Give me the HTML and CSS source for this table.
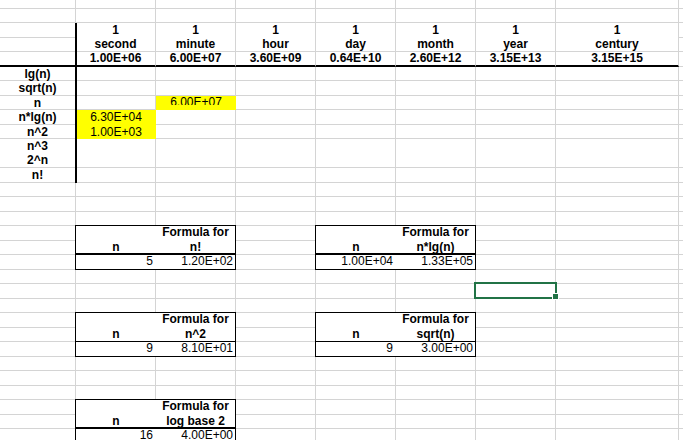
FILE: index.html
```html
<!DOCTYPE html>
<html>
<head>
<meta charset="utf-8">
<title>Sheet</title>
<link rel="stylesheet" href="styles.css">
</head>
<body>
<div class="sheet">
  <div class="hdr">
    <div class="hc"><span>1</span><span>second</span></div>
    <div class="hc"><span>1</span><span>minute</span></div>
    <div class="hc"><span>1</span><span>hour</span></div>
    <div class="hc"><span>1</span><span>day</span></div>
    <div class="hc"><span>1</span><span>month</span></div>
    <div class="hc"><span>1</span><span>year</span></div>
    <div class="hc"><span>1</span><span>century</span></div>
    <div class="hv">1.00E+06</div>
    <div class="hv">6.00E+07</div>
    <div class="hv">3.60E+09</div>
    <div class="hv">0.64E+10</div>
    <div class="hv">2.60E+12</div>
    <div class="hv">3.15E+13</div>
    <div class="hv">3.15E+15</div>
  </div>

  <div class="gap">
    <div class="gc"></div><div class="gc"></div><div class="gc"></div><div class="gc"></div>
    <div class="gc"></div><div class="gc"></div><div class="gc"></div><div class="gc last"></div>
  </div>

  <div class="yel y-c8"><span class="clip">6.00E+07</span></div>
  <div class="yel y-b9"><span class="l15">6.30E+04</span><span class="l14">1.00E+03</span></div>

  <div class="labels">
    <div class="lc"></div>
    <div class="lc"></div>
    <div class="lc thick"></div>
    <div class="lc">lg(n)</div>
    <div class="lc">sqrt(n)</div>
    <div class="lc">n</div>
    <div class="lc">n*lg(n)</div>
    <div class="lc">n^2</div>
    <div class="lc two"><span>n^3</span><span>2^n</span></div>
    <div class="lc">n!</div>
  </div>

  <div class="tbl t-bc t-r17">
    <div class="tc"></div><div class="tc f">Formula for</div>
    <div class="tc sub">n</div><div class="tc sub">n!</div>
    <div class="tc num">5</div><div class="tc num n2">1.20E+02</div>
  </div>

  <div class="tbl t-ef t-r17">
    <div class="tc"></div><div class="tc f">Formula for</div>
    <div class="tc sub">n</div><div class="tc sub">n*lg(n)</div>
    <div class="tc num">1.00E+04</div><div class="tc num n2">1.33E+05</div>
  </div>

  <div class="tbl thin t-bc t-r23">
    <div class="tc"></div><div class="tc f">Formula for</div>
    <div class="tc sub">n</div><div class="tc sub">n^2</div>
    <div class="tc num">9</div><div class="tc num n2">8.10E+01</div>
  </div>

  <div class="tbl thin t-ef t-r23">
    <div class="tc"></div><div class="tc f">Formula for</div>
    <div class="tc sub">n</div><div class="tc sub">sqrt(n)</div>
    <div class="tc num">9</div><div class="tc num n2">3.00E+00</div>
  </div>

  <div class="tbl t-bc t-r29">
    <div class="tc"></div><div class="tc f">Formula for</div>
    <div class="tc sub">n</div><div class="tc sub">log base 2</div>
    <div class="tc num">16</div><div class="tc num n2">4.00E+00</div>
  </div>

  <div class="sel"></div>
</div>
</body>
</html>
```

FILE: styles.css
```css
html, body {
  margin: 0;
  padding: 0;
  background: #fff;
  overflow: hidden;
}

body {
  width: 683px;
  height: 440px;
  font-family: "Liberation Sans", Arial, sans-serif;
  font-size: 12px;
  color: #000;
}

.sheet {
  width: 683px;
  display: grid;
  grid-template-columns: 76px repeat(6, 80px) 123px 1fr;
  grid-template-rows: 9px repeat(15, 14px 15px);
  background:
    linear-gradient(to right, transparent 678px, #d4d4d4 678px, #d4d4d4 679px, transparent 679px),
    repeating-linear-gradient(to right, transparent 0, transparent 75px, #d4d4d4 75px, #d4d4d4 76px, transparent 76px, transparent 80px) 0 0 / 556px 100% no-repeat,
    repeating-linear-gradient(to bottom, transparent 0, transparent 8px, #d4d4d4 8px, #d4d4d4 9px, transparent 9px, transparent 22px, #d4d4d4 22px, #d4d4d4 23px, transparent 23px, transparent 29px);
}

.sheet div, .sheet span {
  box-sizing: border-box;
}

/* column header block */
.hdr {
  grid-column: 2 / 9;
  grid-row: 3 / 6;
  display: grid;
  grid-template-columns: repeat(6, 80px) 123px;
  grid-template-rows: 29px 15px;
  font-weight: bold;
  text-align: center;
}

.hc {
  background: #fff;
  border-right: 1px solid #d4d4d4;
  border-bottom: 1px solid #d4d4d4;
  display: flex;
  flex-direction: column;
}

.hc span {
  display: block;
  height: 14px;
  line-height: 14px;
}

.hv {
  background: #fff;
  border-right: 1px solid #d4d4d4;
  border-bottom: 2px solid #000;
  line-height: 13px;
}

/* merged n^3 / 2^n row (no middle gridline) */
.gap {
  grid-column: 2 / 10;
  grid-row: 11 / 13;
  display: grid;
  grid-template-columns: repeat(6, 80px) 123px 1fr;
}

.gc {
  background: #fff;
  border-right: 1px solid #d4d4d4;
  border-bottom: 1px solid #d4d4d4;
}

.gc.last {
  border-right: 0;
}

/* yellow cells */
.yel {
  background: #ffff00;
  text-align: center;
}

.y-c8 {
  grid-column: 3;
  grid-row: 8;
}

.y-b9 {
  grid-column: 2;
  grid-row: 9 / 11;
  display: flex;
  flex-direction: column;
}

.clip {
  display: block;
  height: 9px;
  line-height: 12px;
  overflow: hidden;
}

.l15 {
  display: block;
  height: 15px;
  line-height: 15px;
}

.l14 {
  display: block;
  height: 14px;
  line-height: 14px;
}

/* row labels */
.labels {
  grid-column: 1;
  grid-row: 3 / 14;
  margin-right: -1px;
  border-right: 2px solid #000;
  background: #fff;
  display: grid;
  grid-template-rows: 15px 14px 15px 14px 15px 14px 15px 14px 29px 15px;
  font-weight: bold;
  text-align: center;
}

.lc {
  border-bottom: 1px solid #d4d4d4;
  display: flex;
  align-items: center;
  justify-content: center;
}

.lc.thick {
  border-bottom: 2px solid #000;
}

.lc.two {
  flex-direction: column;
  align-items: stretch;
  justify-content: flex-start;
}

.lc.two span {
  display: block;
  height: 14px;
  line-height: 14px;
}

/* small formula tables */
.tbl {
  display: grid;
  grid-template-columns: 80px 79px;
  grid-template-rows: 15px 14px 14px;
  margin: -1px 0 0 -1px;
  border: 1px solid #000;
  background: #fff;
}

.t-bc { grid-column: 2 / 4; }
.t-ef { grid-column: 5 / 7; }
.t-r17 { grid-row: 17 / 20; }
.t-r23 { grid-row: 23 / 26; }
.t-r29 { grid-row: 29 / 32; }

.tc {
  white-space: nowrap;
}

.tc.f {
  font-weight: bold;
  text-align: center;
  line-height: 12px;
}

.tc.sub {
  font-weight: bold;
  text-align: center;
  line-height: 12px;
  border-bottom: 2px solid #000;
}

.tbl.thin .tc.sub {
  border-bottom-width: 1px;
  line-height: 13px;
}

.tc.num {
  text-align: right;
  padding-right: 3px;
  line-height: 13px;
}

.tc.num.n2 {
  padding-right: 2px;
}

/* active cell selection */
.sel {
  grid-column: 7;
  grid-row: 21;
  margin: -2px -1px 0 -2px;
  border: 2px solid #217346;
  position: relative;
}

.sel::after {
  content: "";
  position: absolute;
  left: 76px;
  top: 9px;
  width: 7px;
  height: 7px;
  box-sizing: border-box;
  border: 1px solid #fff;
  background: #217346;
}
```
